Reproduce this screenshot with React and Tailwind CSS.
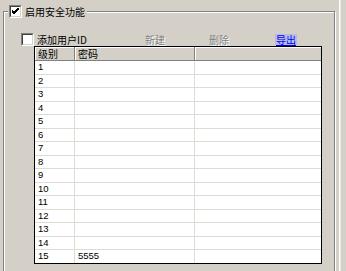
import React from "react";

const FONT = { fontFamily: '"Noto Sans CJK SC", "Liberation Sans", sans-serif' };

function Checkbox({ checked }) {
  return (
    <div className="w-[13px] h-[13px] border border-t-[#808080] border-l-[#808080] border-b-white border-r-white shrink-0">
      <div className="w-full h-full border border-t-[#404040] border-l-[#404040] border-b-[#d4d0c8] border-r-[#d4d0c8] bg-white flex items-center justify-center">
        {checked && (
          <svg width="7" height="7" viewBox="0 0 7 7">
            <path d="M0 2 L2 4 L7 -1 M0 3 L2 5 L7 0 M0 4 L2 6 L7 1" stroke="#000" strokeWidth="1" fill="none" shapeRendering="crispEdges" />
          </svg>
        )}
      </div>
    </div>
  );
}

export default function App() {
  const rows = Array.from({ length: 15 }, (_, i) => i + 1);
  return (
    <div
      className="w-[346px] h-[271px] bg-[#d4d0c8] overflow-hidden flex text-[10px] text-black"
      style={FONT}
    >
      <div className="pl-[3px] pt-[11px]">
        <div className="relative w-[332px] h-[280px] border border-[#808080] shadow-[inset_1px_1px_0_#fff,1px_1px_0_#fff]">
          {/* legend */}
          <div className="absolute left-[4px] top-[-7px] flex items-center gap-[3px] bg-[#d4d0c8] pl-[1px] pr-[2px]">
            <Checkbox checked />
            <span className="leading-[13px]">启用安全功能</span>
          </div>

          <div className="pt-[21px] pl-[17px]">
            {/* toolbar row */}
            <div className="flex items-center h-[13px]">
              <div className="w-[124px] flex items-center gap-[3px]">
                <Checkbox />
                <span className="leading-[13px]">添加用户ID</span>
              </div>
              <div className="w-[64px] text-[#808080] [text-shadow:1px_1px_0_#fff] leading-[13px]">新建</div>
              <div className="w-[66px] text-[#808080] [text-shadow:1px_1px_0_#fff] leading-[13px]">删除</div>
              <div className="px-[1px] bg-[#b8bcdc] text-[#0000ff] underline leading-[11px]">导出</div>
            </div>

            {/* table */}
            <div className="ml-[13px] w-[288px] border border-black bg-white text-[10px]">
              <div className="flex h-[14px] bg-[#d4d0c8] border-b border-[#808080]">
                <div className="w-[40px] border-r border-[#808080] shadow-[inset_1px_1px_0_#fff] pl-[3px] leading-[13px]">级别</div>
                <div className="w-[120px] border-r border-[#808080] shadow-[inset_1px_1px_0_#fff] pl-[3px] leading-[13px]">密码</div>
                <div className="flex-1 shadow-[inset_1px_1px_0_#fff]"></div>
              </div>
              {rows.map((n, i) => (
                <div
                  key={n}
                  className={
                    "flex " +
                    (i === 14 ? "h-[13px]" : i % 2 === 0 ? "h-[14px] border-b border-[#dedbd4]" : "h-[13px] border-b border-[#dedbd4]")
                  }
                >
                  <div
                    className="w-[40px] border-r border-[#dedbd4] pl-[3px] text-[9.5px] flex items-center"
                    style={{ fontFamily: '"Liberation Sans", sans-serif' }}
                  >
                    {n}
                  </div>
                  <div
                    className="w-[120px] border-r border-[#dedbd4] pl-[3px] text-[9.5px] flex items-center"
                    style={{ fontFamily: '"Liberation Sans", sans-serif' }}
                  >
                    {n === 15 ? "5555" : ""}
                  </div>
                  <div className="flex-1"></div>
                </div>
              ))}
            </div>
          </div>
        </div>
      </div>
      <div className="ml-[4px] w-[2px] h-full border-l border-white border-r border-r-[#e8e6e0]"></div>
    </div>
  );
}
